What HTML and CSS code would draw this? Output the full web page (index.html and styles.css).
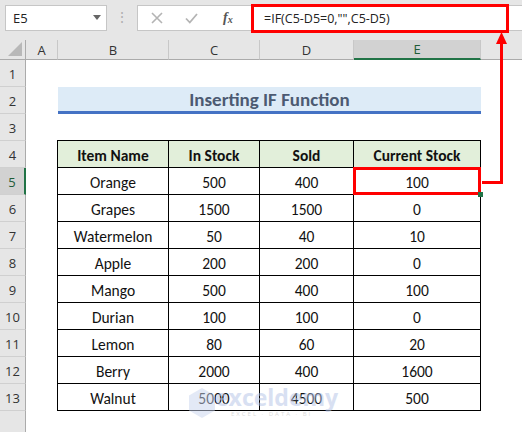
FILE: index.html
```html
<!DOCTYPE html>
<html>
<head>
<meta charset="utf-8">
<link rel="stylesheet" href="styles.css">
</head>
<body>
<div class="app">
  <div class="topbar">
    <div class="namebox"><span class="nb-text">E5</span><span class="nb-arrow"></span></div>
    <div class="dots">⋮</div>
    <div class="fbar">
      <div class="fbtns">
        <svg class="ic" width="12" height="12" viewBox="0 0 12 12"><path d="M1 1L11 11M11 1L1 11" stroke="#b4b4b4" stroke-width="1.6" fill="none"/></svg>
        <svg class="ic" width="13" height="11" viewBox="0 0 13 11"><path d="M1 5.5L4.8 9.5L12 1" stroke="#b4b4b4" stroke-width="1.8" fill="none"/></svg>
        <span class="fx">f<sub>x</sub></span>
      </div>
      <div class="ftext">=IF(C5-D5=0,"",C5-D5)</div>
    </div>
  </div>
  <div class="sheet">
    <div class="ch corner"><span class="tri"></span></div>
    <div class="ch">A</div>
    <div class="ch">B</div>
    <div class="ch">C</div>
    <div class="ch">D</div>
    <div class="ch sel">E</div>
    <div class="ch last"></div>

    <div class="rh r1">1</div>
    <div class="rh r2">2</div>
    <div class="rh r3">3</div>
    <div class="rh r4">4</div>
    <div class="rh r5 sel">5</div>
    <div class="rh r6">6</div>
    <div class="rh r7">7</div>
    <div class="rh r8">8</div>
    <div class="rh r9">9</div>
    <div class="rh r10">10</div>
    <div class="rh r11">11</div>
    <div class="rh r12">12</div>
    <div class="rh r13">13</div>
    <div class="rh r14"></div>

    <div class="title">Inserting IF Function</div>

    <div class="data">
      <div class="c hd">Item Name</div><div class="c hd">In Stock</div><div class="c hd">Sold</div><div class="c hd">Current Stock</div>
      <div class="c">Orange</div><div class="c">500</div><div class="c">400</div><div class="c">100</div>
      <div class="c">Grapes</div><div class="c">1500</div><div class="c">1500</div><div class="c">0</div>
      <div class="c">Watermelon</div><div class="c">50</div><div class="c">40</div><div class="c">10</div>
      <div class="c">Apple</div><div class="c">200</div><div class="c">200</div><div class="c">0</div>
      <div class="c">Mango</div><div class="c">500</div><div class="c">400</div><div class="c">100</div>
      <div class="c">Durian</div><div class="c">100</div><div class="c">100</div><div class="c">0</div>
      <div class="c">Lemon</div><div class="c">80</div><div class="c">60</div><div class="c">20</div>
      <div class="c">Berry</div><div class="c">2000</div><div class="c">400</div><div class="c">1600</div>
      <div class="c">Walnut</div><div class="c">5000</div><div class="c">4500</div><div class="c">500</div>
      <div class="hl"></div>
      <div class="handle"></div>
      <div class="wm"><span class="wm-logo"></span><span class="wm-main">exceldemy</span><span class="wm-sub">EXCEL · DATA · BI</span></div>
    </div>
  </div>
  <svg class="arrow" width="522" height="432" viewBox="0 0 522 432">
    <path d="M482 182.5H501.5V42" stroke="#ff0000" stroke-width="3" fill="none"/>
    <path d="M496 44L507 44L501.5 32Z" fill="#ff0000"/>
  </svg>
</div>
</body>
</html>
```
FILE: styles.css
```css
* { box-sizing: border-box; }
html, body { margin: 0; padding: 0; }
body { width: 522px; height: 432px; overflow: hidden; background: #fff; font-family: Carlito, Lato, "Liberation Sans", sans-serif; }
.app { position: relative; width: 522px; height: 432px; }

.topbar { height: 40px; background: #e6e6e6; display: flex; align-items: flex-start; padding: 5px 0 0 5px; }
.namebox { width: 102px; height: 26px; background: #fff; border: 1px solid #c6c6c6; display: flex; align-items: center; justify-content: space-between; padding: 0 5px 0 7px; font-family: "Open Sans", "Noto Sans", sans-serif; font-size: 13px; color: #222; }
.nb-arrow { width: 0; height: 0; border-left: 4px solid transparent; border-right: 4px solid transparent; border-top: 5px solid #666; margin-bottom: 2px; }
.dots { width: 30px; text-align: center; color: #b0b0b0; font-size: 14px; line-height: 26px; }
.fbar { flex: 1; height: 26px; background: #fff; border: 1px solid #c6c6c6; border-right: none; display: flex; position: relative; }
.fbtns { width: 113px; display: flex; align-items: center; padding-left: 13px; gap: 22px; }
.fx { font-family: "Liberation Serif", serif; font-style: italic; font-size: 14px; color: #555; font-weight: bold; margin-left: 3px; }
.fx sub { font-size: 10px; vertical-align: baseline; position: relative; top: 1px; }
.ftext { width: 258px; height: 29px; margin-top: -2px; margin-left: 0; border: 3px solid #ff0000; font-family: "Open Sans", "Noto Sans", sans-serif; font-size: 12.5px; color: #222; line-height: 23px; padding-left: 10px; background: #fff; white-space: nowrap; }

.sheet { display: grid; grid-template-columns: 26px 32px 111px 91px 94px 127px 41px; grid-template-rows: 20px repeat(13, 27px) 1fr; height: 392px; position: relative; }
.ch { background: #e6e6e6; border-right: 1px solid #c8c8c8; border-bottom: 1px solid #ababab; display: flex; align-items: center; justify-content: center; font-family: "Open Sans", "Noto Sans", sans-serif; font-size: 13px; color: #333; grid-row: 1; }
.ch.corner { border-right: 1px solid #ababab; position: relative; }
.tri { position: absolute; right: 3px; bottom: 3px; width: 0; height: 0; border-left: 14px solid transparent; border-bottom: 14px solid #b8b8b8; }
.ch.sel { background: #d2d2d2; color: #1e5c38; border-bottom: 2px solid #217346; }
.ch.last { border-right: none; }

.rh { grid-column: 1; background: #e6e6e6; border-right: 1px solid #ababab; border-bottom: 1px solid #d0d0d0; display: flex; align-items: flex-end; justify-content: center; padding-bottom: 3px; font-family: "Open Sans", "Noto Sans", sans-serif; font-size: 13px; color: #333; }
.rh.sel { background: #d2d2d2; color: #1e5c38; border-right: 2px solid #217346; }
.rh.r14 { border-bottom: none; }

.title { grid-column: 3 / 7; grid-row: 3; background: #ddebf7; border-bottom: 3px solid #4472c4; display: flex; align-items: center; justify-content: center; font-weight: bold; font-size: 19px; color: #4c5a72; padding-top: 1px; }

.data { grid-column: 3 / 7; grid-row: 5 / 15; display: grid; grid-template-columns: 111px 91px 94px 127px; grid-template-rows: repeat(10, 27px); border-left: 1px solid #000; border-top: 1px solid #000; margin-left: -1px; margin-top: -1px; position: relative; }
.c { border-right: 1px solid #000; border-bottom: 1px solid #000; display: flex; align-items: center; justify-content: center; font-size: 15.5px; color: #111; padding-top: 2px; }
.c.hd { background: #e2efda; font-weight: bold; }
.hl { position: absolute; left: 295px; top: 26px; width: 128px; height: 28px; border: 3px solid #ff0000; }
.handle { position: absolute; left: 420px; top: 51px; width: 5px; height: 5px; background: #217346; }

.wm { position: absolute; left: 131px; top: 244px; width: 150px; height: 40px; pointer-events: none; opacity: 0.5; }
.wm-logo { position: absolute; left: 0; top: 3px; width: 26px; height: 30px; background: #c9d4ee; clip-path: polygon(50% 0, 100% 25%, 100% 75%, 50% 100%, 0 75%, 0 25%); }
.wm-main { position: absolute; left: 26px; top: -3px; font-family: "Open Sans", sans-serif; font-weight: bold; font-size: 23px; line-height: 30px; color: #b3c2e6; }
.wm-sub { position: absolute; left: 42px; top: 25px; font-family: "Open Sans", sans-serif; font-size: 6px; line-height: 8px; color: #b9b9b9; letter-spacing: 2px; }

.arrow { position: absolute; left: 0; top: 0; pointer-events: none; }
```
